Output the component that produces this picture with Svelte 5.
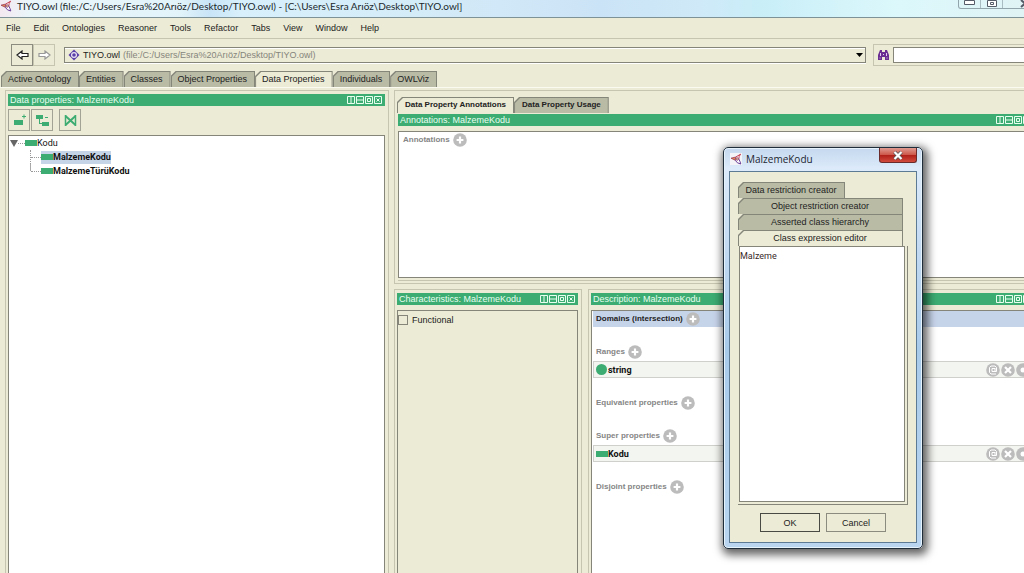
<script>
	const menus = ['File', 'Edit', 'Ontologies', 'Reasoner', 'Tools', 'Refactor', 'Tabs', 'View', 'Window', 'Help'];
	const tabs = ['Active Ontology', 'Entities', 'Classes', 'Object Properties', 'Data Properties', 'Individuals', 'OWLViz'];
	const creators = ['Data restriction creator', 'Object restriction creator', 'Asserted class hierarchy', 'Class expression editor'];

	const sections = [
		{ title: 'Domains (intersection)', items: [] },
		{ title: 'Ranges', items: [{ name: 'string', kind: 'datatype' }] },
		{ title: 'Equivalent properties', items: [] },
		{ title: 'Super properties', items: [{ name: 'Kodu', kind: 'property' }] },
		{ title: 'Disjoint properties', items: [] }
	];

	let tab = $state('Data Properties');
	let usage = $state('Data Property Annotations');
	let creator = $state('Class expression editor');
	let selected = $state('MalzemeKodu');
	let section = $state('Domains (intersection)');
	let functional = $state(false);
	let expression = $state('Malzeme');
	let open = $state(true);
</script>

{#snippet logo()}
	<svg class="logo" viewBox="0 0 12 12" aria-hidden="true">
		<path d="M1 5.2 L5.5 3.8 L11 1 L9 6 L11 11 L5.5 8 Z" fill="#fff" />
		<path d="M1 5.2 L5.8 4 L5.2 7.2 Z" fill="#e58a4c" stroke="#9a3b5a" stroke-width=".8" />
		<path d="M5.8 4 L10.6 1.2 Q8.6 3.4 8.8 6" fill="none" stroke="#c43c50" stroke-width="1" />
		<path d="M5.2 7.2 Q7 10.6 10.8 11 Q10 8 8.8 6" fill="none" stroke="#6a3f9a" stroke-width="1" />
		<circle cx="7.2" cy="6" r="1.3" fill="#f1c48a" stroke="#7a3a7a" stroke-width=".7" />
	</svg>
{/snippet}

{#snippet viewHeader(title)}
	<header class="view-header">
		<h2>{title}</h2>
		<svg width="35" height="8" viewBox="0 0 35 8" fill="none" stroke="#e8fff0" aria-hidden="true">
			<path d="M.5 .5h7v7h-7z M4 1v6" />
			<path d="M9.5 .5h7v7h-7z M10 4h6" />
			<path d="M18.5 .5h7v7h-7z M20.5 2.5h3v3h-3z" />
			<path d="M27.5 .5h7v7h-7z M29.5 2.5l3 3 M32.5 2.5l-3 3" />
		</svg>
	</header>
{/snippet}

{#snippet add(title)}
	<button class="round" aria-label="Add {title}">
		<svg viewBox="0 0 14 14"><circle cx="7" cy="7" r="6.8" /><path d="M7 3.6v6.8 M3.6 7h6.8" stroke-width="2.2" /></svg>
	</button>
{/snippet}

<div class="app">
	<div class="titlebar">
		{@render logo()}
		<h1>TIYO.owl (file:/C:/Users/Esra%20Arıöz/Desktop/TIYO.owl) - [C:\Users\Esra Arıöz\Desktop\TIYO.owl]</h1>
		<div class="window-buttons">
			<button aria-label="Minimize"><svg width="11" height="5"><path d="M.5 .5h10v4h-10z" fill="#fff" stroke="#555c68" /></svg></button>
			<button aria-label="Maximize"><svg width="10" height="8"><path d="M.5 .5h9v6h-9z M3.5 2.5h3v2h-3z" fill="#fff" stroke="#555c68" /></svg></button>
			<button class="last" aria-label="Close"><svg width="10" height="8"><path d="M1 0l8 7 M9 0l-8 7" stroke="#555c68" stroke-width="2" /></svg></button>
		</div>
	</div>

	<nav class="menubar">
		{#each menus as name}
			<button>{name}</button>
		{/each}
	</nav>

	<div class="toolbar">
		<div class="history">
			<button aria-label="Back"><svg width="13" height="10"><path d="M1 5l5-4v2.5h6v3h-6v2.5z" fill="#fff" stroke="#222" stroke-width="1.2" /></svg></button>
			<button class="off" aria-label="Forward" disabled><svg width="13" height="10"><path d="M12 5l-5-4v2.5h-6v3h6v2.5z" fill="#fff" stroke="#999" stroke-width="1.2" /></svg></button>
		</div>
		<div class="location">
			<svg width="12" height="12" viewBox="0 0 12 12" aria-hidden="true">
				<path d="M6 .5l5.5 5.5-5.5 5.5-5.5-5.5z" fill="#5a3fa8" />
				<circle cx="6" cy="6" r="3" fill="#e9e4f4" /><circle cx="6" cy="6" r="1.8" fill="#5a3fa8" />
			</svg>
			<label for="ontology">TIYO.owl</label>
			<select id="ontology">
				<option>(file:/C:/Users/Esra%20Arıöz/Desktop/TIYO.owl)</option>
			</select>
			<svg class="arrow" width="7" height="4" aria-hidden="true"><path d="M0 0h7l-3.5 4z" /></svg>
		</div>
		<div class="search">
			<label for="find" aria-label="Search">
				<svg width="11" height="10" viewBox="0 0 11 10"><path d="M2 0h2v2h3v-2h2l2 5v5h-4v-3h-3v3h-4v-5z" fill="#6b2f93" /><path d="M2.5 3v3 M8.5 3v3 M5 4.5h1 M1.5 8h1 M8.5 8h1" stroke="#e3cdf0" /></svg>
			</label>
			<input id="find" type="text" />
		</div>
	</div>

	<div class="tabs main-tabs">
		{#each tabs as name}
			<button class="tab" class:active={tab === name} onclick={() => (tab = name)}>{name}</button>
		{/each}
	</div>

	<main>
		<section class="view hierarchy">
			{@render viewHeader('Data properties: ' + selected)}
			<div class="tools">
				<button aria-label="Add sub property"><svg width="13" height="13" fill="#3cac72"><path d="M1 6h9v5h-9z M9 2h4v1h-4z M10.5 .5h1v4h-1z" /></svg></button>
				<button aria-label="Add sibling property"><svg width="13" height="13" fill="#3cac72"><path d="M0 1h7v4h-7z M6 8h7v4h-7z M9 3h3v1h-3z M3 5h1v4h2v1h-3z" /></svg></button>
				<button class="delete" aria-label="Delete property"><svg width="13" height="13" fill="none" stroke="#3cac72" stroke-width="1.5"><path d="M1.5 1v11 M11.5 1v11" /><path d="M1.5 2l10 9 M11.5 2l-10 9" stroke-width="2" /></svg></button>
			</div>
			<div class="box tree">
				<div class="node">
					<button class="toggle" aria-label="Toggle Kodu" onclick={() => (open = !open)}><svg width="8" height="7"><path d="M0 0h8l-4 7z" fill="#666" /></svg></button>
					<span class="dots"></span>
					<button class="entity" class:selected={selected === 'Kodu'} onclick={() => (selected = 'Kodu')}><i class="property"></i>Kodu</button>
				</div>
				{#if open}
					<ul>
						{#each ['MalzemeKodu', 'MalzemeTürüKodu'] as name}
							<li class="node">
								<span class="dots"></span>
								<button class="entity bold" class:selected={selected === name} onclick={() => (selected = name)}><i class="property"></i>{name}</button>
							</li>
						{/each}
					</ul>
				{/if}
			</div>
		</section>

		<div class="details">
			<section class="view annotations">
				<div class="tabs usage-tabs">
					{#each ['Data Property Annotations', 'Data Property Usage'] as name}
						<button class="tab" class:active={usage === name} onclick={() => (usage = name)}>{name}</button>
					{/each}
				</div>
				{@render viewHeader('Annotations: ' + selected)}
				<div class="box">
					<div class="label">Annotations {@render add('annotation')}</div>
				</div>
			</section>

			<div class="lower">
				<section class="view">
					{@render viewHeader('Characteristics: ' + selected)}
					<div class="box plain">
						<label class="check"><input type="checkbox" bind:checked={functional} />Functional</label>
					</div>
				</section>

				<section class="view">
					{@render viewHeader('Description: ' + selected)}
					<div class="box description">
						{#each sections as s}
							<!-- svelte-ignore a11y_click_events_have_key_events, a11y_no_static_element_interactions -->
							<div class="label" class:current={section === s.title} onclick={() => (section = s.title)}>
								{s.title} {@render add(s.title)}
							</div>
							{#each s.items as item}
								<div class="item">
									<i class={item.kind}></i>
									<span>{item.name}</span>
									<div class="actions">
										<button class="round" aria-label="Annotate"><svg viewBox="0 0 14 14"><circle cx="7" cy="7" r="6.8" /><path d="M9 5v3.5h1.5v-4l-1.5-1.5h-4l-1.5 1.5v5l1.5 1.5h5 M9 5.5h-3v3h3" /></svg></button>
										<button class="round" aria-label="Delete"><svg viewBox="0 0 14 14"><circle cx="7" cy="7" r="6.8" /><path d="M4 4l6 6 M10 4l-6 6" stroke-width="2.2" /></svg></button>
										<button class="round" aria-label="Edit"><svg viewBox="0 0 14 14"><circle cx="7" cy="7" r="6.8" /><circle cx="7" cy="7" r="2.5" class="dot" /></svg></button>
									</div>
								</div>
							{/each}
						{/each}
					</div>
				</section>
			</div>
		</div>
	</main>

	<div class="dialog" role="dialog" aria-labelledby="dialog-title">
		<div class="dialog-title">
			{@render logo()}
			<h2 id="dialog-title">MalzemeKodu</h2>
			<button class="close" aria-label="Close"><svg width="10" height="9"><path d="M1.5 1l7 7 M8.5 1l-7 7" stroke="#555" stroke-width="3.6" /><path d="M1.5 1l7 7 M8.5 1l-7 7" stroke="#fff" stroke-width="2.2" /></svg></button>
		</div>
		<div class="dialog-body">
			<div class="creator-tabs">
				{#each creators as name}
					<button class="tab" class:active={creator === name} onclick={() => (creator = name)}>{name}</button>
				{/each}
			</div>
			<div class="editor">
				<textarea aria-label="Class expression" spellcheck="false" bind:value={expression}></textarea>
			</div>
			<div class="buttons">
				<button class="default">OK</button>
				<button>Cancel</button>
			</div>
		</div>
	</div>
</div>

<style>
	:global(body) {
		overflow: hidden;
	}

	.app {
		--bg: #ecebd5;
		--line: #85857a;
		--soft: #c6c5b0;
		--green: #3cac72;
		position: relative;
		display: flex;
		flex-direction: column;
		height: 100vh;
		overflow: hidden;
		background: var(--bg);
		color: #222;
		font: 9px/12px "Liberation Sans", Arial, sans-serif;
	}

	.app * {
		box-sizing: border-box;
	}

	button,
	input,
	select,
	textarea {
		margin: 0;
		padding: 0;
		border: 0;
		border-radius: 0;
		background: none;
		color: inherit;
		font: inherit;
		outline: none;
	}

	h1,
	h2,
	ul {
		margin: 0;
		padding: 0;
		font: inherit;
		list-style: none;
	}

	svg {
		display: block;
		flex: none;
	}

	.logo {
		width: 12px;
		height: 12px;
	}

	/* window frame */
	.titlebar {
		display: flex;
		align-items: flex-start;
		gap: 5px;
		height: 18px;
		flex: none;
		border-bottom: 1px solid #7c9297;
		background: linear-gradient(90deg, #f4e9f0 0, #e9f6fa 30px, #e2f4fa 180px, #c8e4f7 210px, #d8f0fb 240px, #d4ecf8 420px, #cbe3f6 600px, #cfe9f8 700px, #c9eef8 760px, #dcf8fb 900px, #e0f3f5);
	}
	.titlebar h1 {
		flex: 1;
		font: 10px/13px Lato, "Open Sans", sans-serif;
		white-space: nowrap;
		color: #20282c;
	}
	.window-buttons {
		display: flex;
		height: 9px;
		margin-right: -24px;
		border: 1px solid #93a5ac;
		border-top: 0;
		border-radius: 0 0 3px 3px;
	}
	.window-buttons button {
		display: grid;
		place-items: start center;
		width: 22px;
		border-right: 1px solid #a9bcc2;
	}
	.window-buttons .last {
		width: 44px;
	}

	.menubar {
		display: flex;
		height: 21px;
		flex: none;
		border-bottom: 1px solid var(--soft);
	}
	.menubar button {
		padding: 0 7px 0 6px;
	}

	.toolbar {
		display: flex;
		align-items: center;
		height: 31px;
		flex: none;
		margin-right: -14px;
		padding-left: 11px;
	}
	.history {
		display: flex;
	}
	.history button {
		display: grid;
		place-items: center;
		width: 22px;
		height: 22px;
		border: 1px solid #8c8c80;
	}
	.history .off {
		border-color: var(--soft);
	}
	.location {
		display: flex;
		align-items: center;
		flex: 1;
		height: 16px;
		margin-left: 9px;
		padding: 0 2px 0 3px;
		border: 1px solid var(--line);
		box-shadow: inset 0 1px #fff, 0 1px #fff;
	}
	.location label {
		margin: 0 3px;
	}
	.location select {
		flex: 1;
		appearance: none;
		color: #85857c;
	}
	.search {
		display: flex;
		align-items: center;
		width: 165px;
		height: 22px;
		margin-left: 7px;
		border: 1px solid var(--soft);
		border-right: 0;
	}
	.search label {
		padding: 0 4px;
	}
	.search input {
		flex: 1;
		min-width: 0;
		height: 16px;
		border: 1px solid var(--line);
		background: #fff;
	}

	/* tabs with a cut upper left corner */
	.tabs {
		display: flex;
		align-items: flex-end;
		flex: none;
	}
	.tab {
		position: relative;
		isolation: isolate;
		height: 16px;
		padding: 0 8px 0 7px;
		background: #85867a;
		clip-path: polygon(5px 0, 100% 0, 100% 100%, 0 100%, 0 5px);
		white-space: nowrap;
	}
	.tab::before {
		content: '';
		position: absolute;
		inset: 1px 1px 0 1px;
		z-index: -1;
		background: #b9bba5;
		clip-path: polygon(5px 0, 100% 0, 100% 100%, 0 100%, 0 5px);
	}
	.tab.active::before {
		background: var(--bg);
	}
	.main-tabs {
		height: 17px;
		padding-left: 1px;
		box-shadow: 0 1px #fafaf0;
	}
	.usage-tabs {
		margin-left: -1px;
		font-size: 8px;
		font-weight: bold;
	}
	.usage-tabs .tab {
		padding: 0 8px;
	}

	main {
		display: flex;
		flex: 1;
		min-height: 0;
		gap: 5px;
		margin-right: -14px;
		padding: 3px 0 0 5px;
	}

	.view {
		display: flex;
		flex-direction: column;
		min-width: 0;
		padding: 3px 3px 0 2px;
		border: 1px solid var(--soft);
		border-bottom: 0;
	}
	.hierarchy {
		width: 384px;
		flex: none;
	}
	.view-header {
		display: flex;
		align-items: center;
		justify-content: space-between;
		height: 12px;
		flex: none;
		padding: 0 3px 0 2px;
		background: var(--green);
		color: #e8fff0;
	}
	.box {
		flex: 1;
		min-height: 0;
		margin-top: 5px;
		border: 1px solid var(--line);
		border-bottom: 0;
		background: #fff;
	}
	.box.plain {
		background: var(--bg);
	}

	.tools {
		display: flex;
		gap: 1px;
		margin-top: 3px;
	}
	.tools button {
		display: grid;
		place-items: center;
		width: 22px;
		height: 22px;
		border: 1px solid #a3a395;
	}
	.tools .delete {
		margin-left: 5px;
	}

	.tree {
		margin-top: 4px;
		padding: 0 1px;
		font: 9px/14px Roboto, sans-serif;
		color: #111;
	}
	.node {
		display: flex;
		align-items: center;
		height: 14px;
	}
	.toggle {
		width: 8px;
	}
	.dots {
		width: 7px;
		border-top: 1px dotted #999;
	}
	ul {
		margin-left: 20px;
	}
	ul .node {
		border-left: 1px dotted #999;
	}
	ul .node:last-child {
		border-image: linear-gradient(#aaa 50%, transparent 50%) 1;
		border-width: 0 0 0 1px;
	}
	ul .dots {
		width: 10px;
	}
	.entity {
		display: flex;
		align-items: center;
		height: 13px;
	}
	.entity.bold {
		font-weight: bold;
	}
	.entity.selected {
		background: #c6d4e8;
	}
	i.property {
		width: 12px;
		height: 6px;
		background: var(--green);
	}
	i.datatype {
		width: 11px;
		height: 11px;
		margin-right: 1px;
		border-radius: 50%;
		background: var(--green);
	}

	.details {
		display: flex;
		flex-direction: column;
		flex: 1;
		min-width: 0;
		gap: 5px;
	}
	.annotations {
		height: 194px;
		flex: none;
		padding: 6px 3px 5px;
		border-bottom: 1px solid var(--soft);
	}
	.annotations .view-header {
		margin-top: 1px;
	}
	.annotations .box {
		border-bottom: 1px solid var(--line);
		box-shadow: 0 2px var(--bg), 0 3px var(--soft);
	}
	.annotations .label {
		padding-left: 4px;
	}
	.lower {
		display: grid;
		grid-template-columns: 188px 1fr;
		gap: 6px;
		flex: 1;
		min-height: 0;
	}

	.label {
		display: flex;
		align-items: center;
		gap: 3px;
		height: 16px;
		color: #858585;
		font-size: 8px;
		font-weight: bold;
	}
	.description .label {
		margin: 0 1px 17px;
		padding-left: 3px;
	}
	.description .label:has(+ .item) {
		margin-bottom: 1px;
	}
	.description .label.current {
		background: #c6d4ea;
		color: #222;
	}
	.round {
		width: 14px;
		height: 14px;
	}
	.round svg {
		width: 14px;
		height: 14px;
		fill: #bcbcbc;
		stroke: none;
	}
	.round path {
		fill: none;
		stroke: #fff;
	}
	.round .dot {
		fill: #fff;
	}
	.item {
		display: flex;
		align-items: center;
		height: 17px;
		margin: 0 1px 17px;
		padding-left: 2px;
		border: 1px solid #cfd0cc;
		background: #f3f5f0;
		color: #111;
		font: bold 9px/14px Roboto, sans-serif;
	}
	.actions {
		display: flex;
		gap: 1px;
		margin-left: auto;
		margin-right: 1px;
	}

	.check {
		display: flex;
		align-items: center;
		gap: 4px;
		height: 17px;
	}
	.check input {
		width: 10px;
		height: 10px;
		appearance: none;
		border: 1px solid var(--line);
	}
	.check input:checked {
		background: #555;
		box-shadow: inset 0 0 0 2px var(--bg);
	}

	/* floating class editor */
	.dialog {
		position: absolute;
		left: 723px;
		top: 147px;
		display: flex;
		flex-direction: column;
		width: 200px;
		height: 402px;
		padding: 0 5px 5px;
		border: 1px solid #1f2c3a;
		border-radius: 5px;
		background: linear-gradient(#c4d8ee, #dceafa 20px, #c3daf2 100px, #a9cbea 200px, #b9d5f0);
		box-shadow: inset 0 0 0 1px #e6f2fc, 2px 3px 9px 3px rgba(0, 0, 0, .6);
	}
	.dialog-title {
		display: flex;
		align-items: flex-start;
		height: 23px;
		flex: none;
	}
	.dialog-title .logo {
		margin: 5px 4px 0 1px;
		background: #f4f4f8;
	}
	.dialog-title h2 {
		flex: 1;
		padding-top: 5px;
		font: 10px/13px "Open Sans", "Noto Sans", sans-serif;
		color: #1c2630;
	}
	.close {
		display: grid;
		place-items: center;
		width: 38px;
		height: 15px;
		border: 1px solid #6b2a2a;
		border-top: 0;
		border-radius: 0 0 3px 3px;
		background: linear-gradient(#e09a90, #cc5648 50%, #b01f18 50%, #d04a3c);
	}
	.dialog-body {
		display: flex;
		flex-direction: column;
		flex: 1;
		min-height: 0;
		padding: 10px 8px;
		border: 1px solid #5d7a94;
		background: var(--bg);
	}
	.creator-tabs {
		display: flex;
		flex-direction: column;
		align-items: stretch;
		margin-right: 5px;
	}
	.creator-tabs .tab:first-child {
		align-self: flex-start;
		width: 107px;
	}
	.editor {
		display: flex;
		flex: 1;
		min-height: 0;
		padding: 0 2px 2px 1px;
		border: 1px solid var(--line);
		border-width: 0 1px 1px 0;
	}
	textarea {
		flex: 1;
		min-width: 0;
		padding: 2px 0;
		resize: none;
		border: 1px solid var(--line);
		background: #fff;
		font: 9px/14px Roboto, sans-serif;
		color: #3a2a2a;
	}
	.buttons {
		display: flex;
		justify-content: center;
		gap: 6px;
		margin-top: 8px;
	}
	.buttons button {
		width: 60px;
		height: 19px;
		border: 1px solid #8b8b80;
	}
	.buttons .default {
		border-color: #4a4a45;
	}
</style>
